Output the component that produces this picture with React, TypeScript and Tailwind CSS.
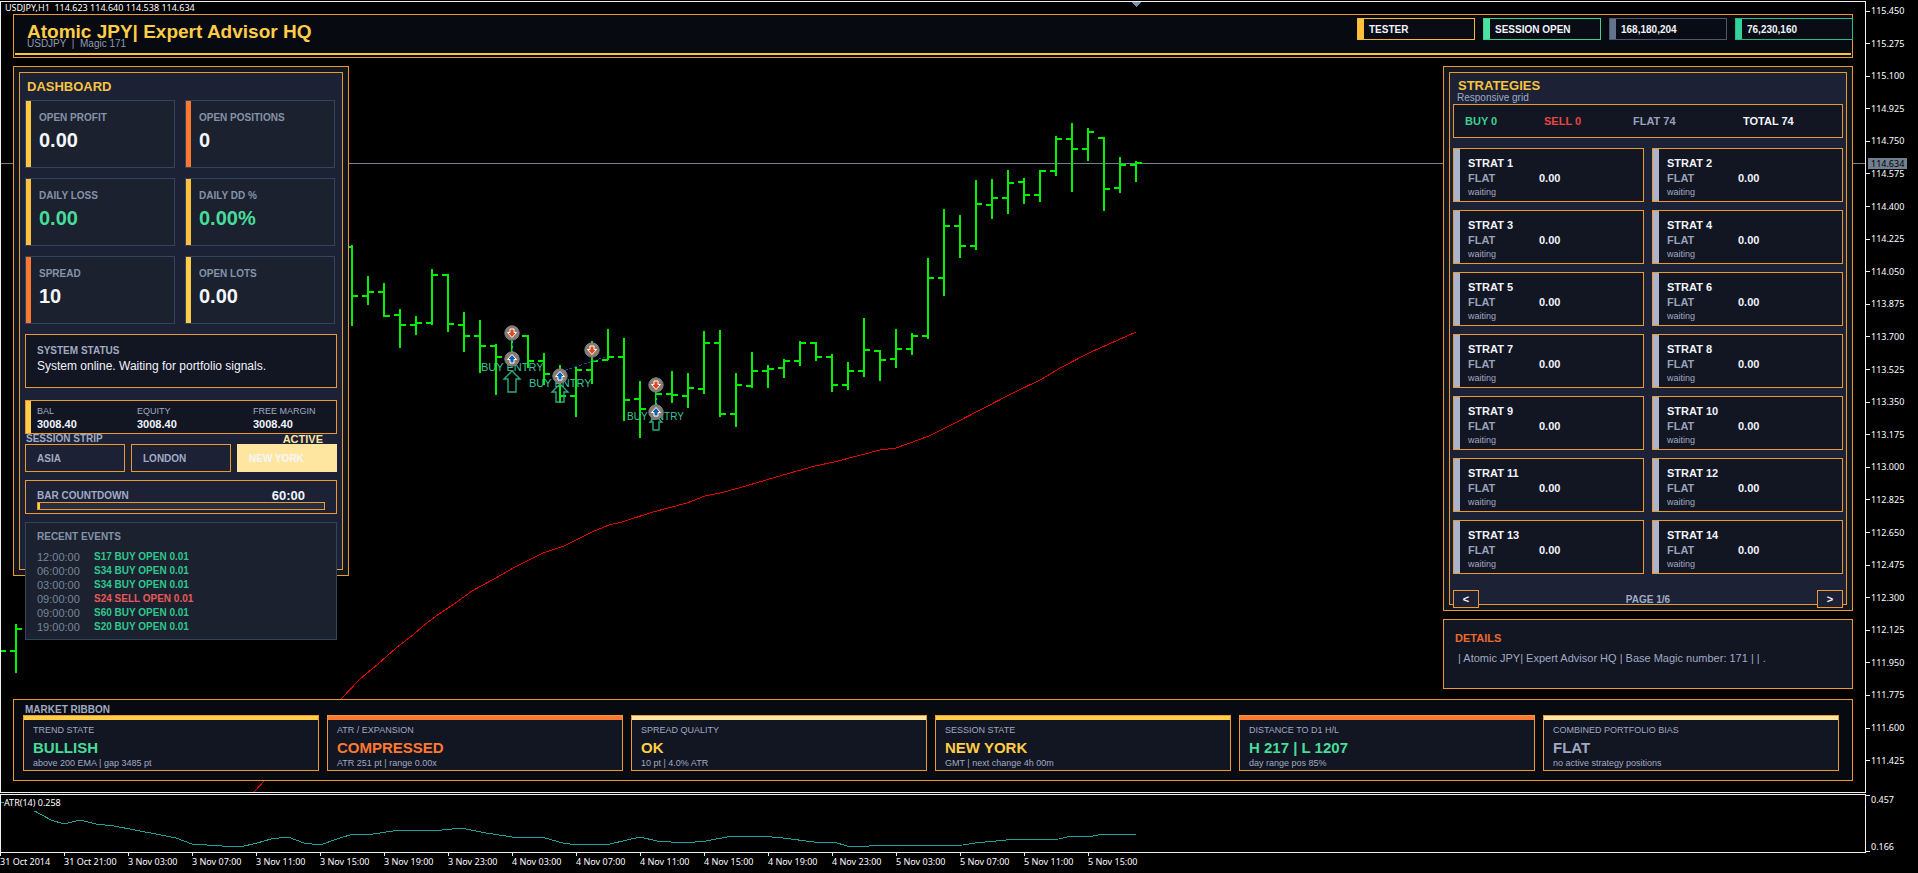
import { useState } from 'react';
import clsx from 'clsx';

const BARS: [number, number, number, number, number][] = [
  // x, high, low, open, close
  [0, 640, 660, 651, 651],
  [16, 624, 673, 651, 629],
  [352, 245, 326, 247, 296],
  [368, 276, 305, 296, 292],
  [384, 283, 317, 292, 316],
  [400, 309, 348, 315, 325],
  [416, 316, 335, 325, 323],
  [432, 269, 325, 323, 275],
  [448, 274, 332, 275, 324],
  [464, 312, 352, 325, 336],
  [480, 320, 373, 336, 346],
  [496, 344, 395, 346, 357],
  [512, 330, 360, 357, 336],
  [528, 335, 368, 336, 361],
  [544, 353, 385, 361, 374],
  [560, 365, 403, 374, 396],
  [576, 366, 417, 396, 370],
  [592, 341, 384, 370, 361],
  [608, 329, 360, 360, 357],
  [624, 338, 421, 357, 400],
  [640, 381, 438, 399, 409],
  [656, 380, 418, 409, 394],
  [672, 371, 403, 394, 395],
  [688, 373, 408, 396, 388],
  [704, 331, 394, 389, 343],
  [720, 330, 417, 343, 414],
  [736, 373, 427, 414, 385],
  [752, 352, 388, 386, 371],
  [768, 365, 388, 371, 369],
  [784, 359, 378, 368, 361],
  [800, 341, 366, 361, 343],
  [816, 342, 361, 343, 357],
  [832, 354, 392, 357, 385],
  [848, 362, 390, 385, 371],
  [864, 318, 377, 371, 350],
  [880, 350, 381, 351, 360],
  [896, 329, 368, 359, 349],
  [912, 333, 355, 349, 336],
  [928, 258, 339, 336, 278],
  [944, 209, 296, 278, 226],
  [960, 215, 258, 226, 246],
  [976, 180, 250, 246, 204],
  [992, 179, 219, 205, 198],
  [1008, 170, 214, 198, 183],
  [1024, 178, 204, 182, 195],
  [1040, 170, 202, 195, 171],
  [1056, 136, 176, 171, 139],
  [1072, 123, 192, 139, 149],
  [1088, 128, 161, 149, 132],
  [1104, 137, 211, 138, 189],
  [1120, 157, 193, 188, 165],
  [1136, 161, 182, 165, 163],
];

const EMA_POINTS =
  '254,792 265,780 300,743 341,699 360,679 378,664 396,648 414,634 428,622 439,614 454,604 472,591 494,579 515,567 543,553 564,546 592,532 609,525 622,522 653,512 687,503 705,496 720,493 739,488 766,480 797,471 815,466 834,462 861,455 880,450 896,448 910,443 929,436 953,424 984,408 1011,394 1042,379 1060,368 1091,352 1136,332';

const ATR_POINTS =
  '0,802 16,803 31,809 51,820 64,824 80,820 96,824 114,826 135,830 161,835 176,838 192,844 222,846 240,847 257,843 271,839 288,837 304,843 320,845 337,839 353,834 373,834 400,830 433,831 461,828 486,833 512,837 545,838 563,843 577,845 588,844 610,844 640,837 657,841 671,842 695,842 706,841 732,836 761,836 783,838 814,842 834,842 847,846 869,846 874,845 904,845 920,846 963,845 975,843 1006,840 1059,839 1071,836 1089,837 1102,834 1136,834';

const DEALS = [
  { x: 512, y: 333, side: 'sell' },
  { x: 512, y: 359, side: 'buy' },
  { x: 560, y: 376, side: 'buy' },
  { x: 592, y: 350, side: 'sell' },
  { x: 656, y: 385, side: 'sell' },
  { x: 656, y: 412, side: 'buy' },
];

const TIMES = [
  '31 Oct 2014', '31 Oct 21:00', '3 Nov 03:00', '3 Nov 07:00', '3 Nov 11:00', '3 Nov 15:00',
  '3 Nov 19:00', '3 Nov 23:00', '4 Nov 03:00', '4 Nov 07:00', '4 Nov 11:00', '4 Nov 15:00',
  '4 Nov 19:00', '4 Nov 23:00', '5 Nov 03:00', '5 Nov 07:00', '5 Nov 11:00', '5 Nov 15:00',
];

const PRICES = Array.from({ length: 24 }, (_, i) => (115.45 - i * 0.175).toFixed(3));

const BADGES = [
  { label: 'TESTER', border: 'border-[#f9b934]', bar: 'bg-[#ffc13b]' },
  { label: 'SESSION OPEN', border: 'border-[#3fd08d]', bar: 'bg-[#4ae3a0]' },
  { label: '168,180,204', border: 'border-[#4d586e]', bar: 'bg-[#64748b]' },
  { label: '76,230,160', border: 'border-[#2bb98a]', bar: 'bg-[#34d399]' },
];

const STATS = [
  { label: 'OPEN PROFIT', value: '0.00', color: 'text-[#f4f6fa]', bar: 'bg-[#ffc63f]' },
  { label: 'OPEN POSITIONS', value: '0', color: 'text-[#f4f6fa]', bar: 'bg-[#ff7832]' },
  { label: 'DAILY LOSS', value: '0.00', color: 'text-[#48dc9a]', bar: 'bg-[#ffbe3c]' },
  { label: 'DAILY DD %', value: '0.00%', color: 'text-[#48dc9a]', bar: 'bg-[#ffbe3c]' },
  { label: 'SPREAD', value: '10', color: 'text-[#f4f6fa]', bar: 'bg-[#ff7832]' },
  { label: 'OPEN LOTS', value: '0.00', color: 'text-[#f4f6fa]', bar: 'bg-[#ffcd48]' },
];

const ACCOUNT = [
  { label: 'BAL', value: '3008.40' },
  { label: 'EQUITY', value: '3008.40' },
  { label: 'FREE MARGIN', value: '3008.40' },
];

const SESSIONS = ['ASIA', 'LONDON', 'NEW YORK'];

const EVENTS = [
  { time: '12:00:00', text: 'S17 BUY OPEN 0.01', side: 'buy' },
  { time: '06:00:00', text: 'S34 BUY OPEN 0.01', side: 'buy' },
  { time: '03:00:00', text: 'S34 BUY OPEN 0.01', side: 'buy' },
  { time: '09:00:00', text: 'S24 SELL OPEN 0.01', side: 'sell' },
  { time: '09:00:00', text: 'S60 BUY OPEN 0.01', side: 'buy' },
  { time: '19:00:00', text: 'S20 BUY OPEN 0.01', side: 'buy' },
];

const RIBBON = [
  { label: 'TREND STATE', value: 'BULLISH', note: 'above 200 EMA | gap 3485 pt', color: 'text-[#48dc9a]', bar: 'bg-[#ffcd48]' },
  { label: 'ATR / EXPANSION', value: 'COMPRESSED', note: 'ATR 251 pt | range 0.00x', color: 'text-[#ff7832]', bar: 'bg-[#ff7832]' },
  { label: 'SPREAD QUALITY', value: 'OK', note: '10 pt | 4.0% ATR', color: 'text-[#ffcd48]', bar: 'bg-[#ffe6a0]' },
  { label: 'SESSION STATE', value: 'NEW YORK', note: 'GMT | next change 4h 00m', color: 'text-[#ffcd48]', bar: 'bg-[#ffcd48]' },
  { label: 'DISTANCE TO D1 H/L', value: 'H 217 | L 1207', note: 'day range pos 85%', color: 'text-[#48dc9a]', bar: 'bg-[#ff7832]' },
  { label: 'COMBINED PORTFOLIO BIAS', value: 'FLAT', note: 'no active strategy positions', color: 'text-[#a0aac3]', bar: 'bg-[#ffe6a0]' },
];

const TOTAL_STRATEGIES = 74;
const PER_PAGE = 14;
const PAGES = Math.ceil(TOTAL_STRATEGIES / PER_PAGE);

function DealMarker({ x, y, side }: { x: number; y: number; side: string }) {
  return (
    <g transform={`translate(${x} ${y})`}>
      <circle r="7.2" fill="#8c7b6e" stroke="#76808e" strokeWidth="1" />
      <path
        d="M0 -4.5 L4.5 0.5 H2 V4 H-2 V0.5 H-4.5 Z"
        transform={side === 'sell' ? 'rotate(180)' : undefined}
        fill={side === 'sell' ? '#e8431f' : '#0a62b4'}
        stroke="#ffffff"
        strokeWidth="1"
      />
    </g>
  );
}

function PriceChart() {
  return (
    <svg
      viewBox="1 2 1864 790"
      preserveAspectRatio="xMinYMin slice"
      className="absolute inset-0 h-full w-full font-['Liberation_Sans',Arial,sans-serif]"
      shapeRendering="crispEdges"
    >
      <path d="M1131 2 H1141 L1136 7 Z" fill="#8090a4" />
      <rect x="0" y="163" width="1866" height="1" fill="#708090" />
      <polyline points={EMA_POINTS} fill="none" stroke="#e60000" strokeWidth="1" />
      {BARS.map(([x, high, low, open, close]) => (
        <path
          key={x}
          d={`M${x} ${high} V${low} M${x - 6} ${open} H${x} M${x} ${close} H${x + 6}`}
          stroke="#00f000"
          strokeWidth="2"
        />
      ))}
      <g shapeRendering="auto" fill="#3cc498">
        <text x="481" y="371" fontSize="11">BUY ENTRY</text>
        <text x="529" y="387" fontSize="11">BUY ENTRY</text>
        <text x="627" y="420" fontSize="10">BUY ENTRY</text>
      </g>
      <g shapeRendering="auto" fill="none" stroke="#2cab82" strokeWidth="1.4">
        <path d="M512 371 L520 379 H516 V392 H508 V379 H504 Z" />
        <path d="M560 384 L568 392 H564 V402 H556 V392 H552 Z" />
        <path d="M656 416 L662 422 H659 V430 H653 V422 H650 Z" />
      </g>
      <path d="M512 333 V359 M560 372 L608 356 M656 385 V411" stroke="#0a4f9b" strokeWidth="1" strokeDasharray="3 2" />
      <g shapeRendering="auto">
        {DEALS.map((d) => (
          <DealMarker key={`${d.x}-${d.y}`} {...d} />
        ))}
      </g>
    </svg>
  );
}

function Header() {
  return (
    <header className="border border-[#eb9a2e] bg-[#070a11] pb-[2px]">
      <div className="flex items-start justify-between">
        <div className="pt-[6px] pl-[13px]">
          <h1 className="text-[19px] leading-[22px] font-bold text-[#ffcd48]">Atomic JPY| Expert Advisor HQ</h1>
          <p className="-mt-[5px] text-[10px] leading-3 whitespace-pre text-[#8f99b0]">USDJPY  |  Magic 171</p>
        </div>
        <ul className="mt-[3px] -mr-px flex gap-2">
          {BADGES.map((b) => (
            <li key={b.label} className={clsx('flex h-[22px] w-[118px] border bg-[#090c14]', b.border)}>
              <span className={clsx('w-[6px]', b.bar)} />
              <span className="pt-px pl-[5px] text-[10px] leading-5 font-bold text-[#f0f3fa]">{b.label}</span>
            </li>
          ))}
        </ul>
      </div>
      <div className="mx-px mt-[3px] h-[2px] bg-[#fbc23c]" />
    </header>
  );
}

function Dashboard() {
  const [session, setSession] = useState('NEW YORK');

  return (
    <section className="w-[336px] shrink-0 border border-[#eb9a2e] bg-[#12161f] p-[5px]">
      <div className="border border-[#eb9a2e] bg-[#1c2135] px-[5px]">
        <h2 className="pl-[2px] text-[13px] leading-[27px] font-bold text-[#f6c443]">DASHBOARD</h2>

        <div className="grid grid-cols-2 gap-[10px] pr-[2px]">
          {STATS.map((s) => (
            <div key={s.label} className="flex h-[68px] border border-[#33455a] bg-[#1b212e]">
              <span className={clsx('w-[5px]', s.bar)} />
              <div className="pt-[11px] pl-2">
                <p className="text-[10px] leading-3 font-bold text-[#8592a8]">{s.label}</p>
                <p className={clsx('mt-1 text-[20px] leading-6 font-bold', s.color)}>{s.value}</p>
              </div>
            </div>
          ))}
        </div>

        <div className="mt-[10px] border border-[#eb9a2e] bg-[#121522] pt-[9px] pb-[13px] pl-[11px]">
          <h3 className="text-[10px] leading-[14px] font-bold text-[#a0aac3]">SYSTEM STATUS</h3>
          <p className="text-[12px] leading-4 text-[#f0f3fa]">System online. Waiting for portfolio signals.</p>
        </div>

        <div className="mt-3 flex border border-[#eb9a2e] bg-[#121522]">
          <span className="w-[5px] bg-[#ffcd48]" />
          <dl className="grid flex-1 grid-cols-[100px_116px_1fr] pt-1 pb-[2px] pl-[6px]">
            {ACCOUNT.map((a) => (
              <div key={a.label}>
                <dt className="text-[9px] leading-3 text-[#a0aac3]">{a.label}</dt>
                <dd className="text-[11px] leading-[14px] font-bold text-[#f0f3fa]">{a.value}</dd>
              </div>
            ))}
          </dl>
        </div>

        <div className="flex justify-between pr-[14px] pl-px leading-[10px] font-bold">
          <h3 className="text-[10px] text-[#a0aac3]">SESSION STRIP</h3>
          <span className="text-[11px] text-[#ffe6a0]">ACTIVE</span>
        </div>
        <div className="grid grid-cols-3 gap-[6px]">
          {SESSIONS.map((s) => (
            <button
              key={s}
              type="button"
              onClick={() => setSession(s)}
              className={clsx(
                'h-7 border pl-[11px] text-left text-[10px] font-bold',
                s === session ? 'border-[#ffe6a0] bg-[#ffe6a0] text-[#f5f7ff]' : 'border-[#eb9a2e] bg-[#1c2135] text-[#a0aac3]',
              )}
            >
              {s}
            </button>
          ))}
        </div>

        <div className="mt-2 border border-[#eb9a2e] bg-[#1c2135] px-[11px] pt-2 pb-[3px]">
          <div className="flex justify-between pr-5 leading-[13px] font-bold">
            <span className="text-[10px] text-[#a0aac3]">BAR COUNTDOWN</span>
            <span className="text-[13px] text-[#f0f3fa]">60:00</span>
          </div>
          <div className="h-2 border border-[#eb9a2e] bg-[#262e42]">
            <div className="h-full w-[2px] bg-[#ffcd48]" />
          </div>
        </div>

        {/* the event log hangs below the panel frame */}
        <div className="relative mt-2 -mb-[71px] border border-[#33455a] bg-[#1b212e] pt-[7px] pb-[5px] pl-[11px]">
          <h3 className="text-[10px] leading-[14px] font-bold text-[#8592a8]">RECENT EVENTS</h3>
          <ul className="mt-[6px]">
            {EVENTS.map((e, i) => (
              <li key={i} className="flex leading-[14px]">
                <time className="w-[57px] text-[11px] text-[#78859c]">{e.time}</time>
                <span className={clsx('text-[10px] font-bold', e.side === 'buy' ? 'text-[#2fc78e]' : 'text-[#e65a5a]')}>
                  {e.text}
                </span>
              </li>
            ))}
          </ul>
        </div>
      </div>
    </section>
  );
}

function Strategies() {
  const [page, setPage] = useState(1);
  const first = (page - 1) * PER_PAGE + 1;
  const count = Math.min(PER_PAGE, TOTAL_STRATEGIES - first + 1);

  return (
    <section className="border border-[#eb9a2e] bg-[#12161f] p-[5px]">
      <div className="border border-[#eb9a2e] bg-[#1c2135] px-[3px] pt-[7px]">
        <h2 className="pl-[5px] text-[13px] leading-3 font-bold text-[#f6c443]">STRATEGIES</h2>
        <p className="pl-1 text-[10px] leading-3 text-[#a0aac3]">Responsive grid</p>

        <div className="grid grid-cols-[79px_89px_110px_1fr] border border-[#eb9a2e] bg-[#121522] pl-[11px] text-[11px] leading-8 font-bold">
          <span className="text-[#3ccf8f]">BUY 0</span>
          <span className="text-[#e64646]">SELL 0</span>
          <span className="text-[#98a2b9]">FLAT 74</span>
          <span className="text-[#f0f3fa]">TOTAL 74</span>
        </div>

        <div className="mt-[10px] grid grid-cols-2 gap-2">
          {Array.from({ length: count }, (_, i) => first + i).map((n) => (
            <div key={n} className="flex border border-[#eb9a2e] bg-[#121522]">
              <span className="w-[6px] bg-[#aab4cd]" />
              <div className="pt-[7px] pb-[3px] pl-2">
                <p className="text-[11px] leading-[14px] font-bold text-[#f0f3fa]">STRAT {n}</p>
                <p className="flex text-[11px] leading-4 font-bold">
                  <span className="w-[71px] text-[#98a2b9]">FLAT</span>
                  <span className="text-[#f0f3fa]">0.00</span>
                </p>
                <p className="text-[9px] leading-3 text-[#a0aac3]">waiting</p>
              </div>
            </div>
          ))}
        </div>

        {/* the pager straddles the bottom edge of the inner frame */}
        <div className="mt-4 -mb-1 flex items-center justify-between text-[11px] font-bold">
          <button
            type="button"
            aria-label="Previous page"
            onClick={() => setPage((p) => Math.max(1, p - 1))}
            className="h-[18px] w-[26px] border border-[#eb9a2e] bg-[#1c2135] leading-4 text-[#f0f3fa]"
          >
            &lt;
          </button>
          <span className="text-[10px] text-[#a0aac3]">PAGE {page}/{PAGES}</span>
          <button
            type="button"
            aria-label="Next page"
            onClick={() => setPage((p) => Math.min(PAGES, p + 1))}
            className="h-[18px] w-[26px] border border-[#eb9a2e] bg-[#1c2135] leading-4 text-[#f0f3fa]"
          >
            &gt;
          </button>
        </div>
      </div>
    </section>
  );
}

function Details() {
  return (
    <section className="mt-2 border border-[#eb9a2e] bg-[#121522] px-[11px] pt-[11px] pb-[22px]">
      <h2 className="text-[11px] leading-[14px] font-bold text-[#eb6a2c]">DETAILS</h2>
      <p className="mt-[5px] text-[11px] leading-4 whitespace-pre text-[#a0aac3]">
        {' | Atomic JPY| Expert Advisor HQ | Base Magic number: 171 | | .'}
      </p>
    </section>
  );
}

function MarketRibbon() {
  return (
    <section className="mt-[10px] border border-[#eb9a2e] bg-[#070a11] pt-[5px] pr-[13px] pb-[9px] pl-[9px]">
      <h2 className="pl-[2px] text-[10px] leading-[10px] font-bold text-[#a0aac3]">MARKET RIBBON</h2>
      <div className="grid grid-cols-6 gap-2">
        {RIBBON.map((r) => (
          <div key={r.label} className="border border-[#eb9a2e] bg-[#121522] pb-px">
            <div className={clsx('h-1', r.bar)} />
            <div className="pt-1 pl-[9px]">
              <p className="text-[9px] leading-[13px] text-[#a0aac3]">{r.label}</p>
              <p className={clsx('mt-[2px] text-[15px] leading-[18px] font-bold', r.color)}>{r.value}</p>
              <p className="text-[9px] leading-3 text-[#a0aac3]">{r.note}</p>
            </div>
          </div>
        ))}
      </div>
    </section>
  );
}

export default function App() {
  return (
    <main className="min-h-screen overflow-hidden bg-black pt-px font-['Liberation_Sans',Arial,sans-serif] text-white">
      <div className="flex">
        <div className="relative min-w-0 flex-1 overflow-hidden border border-[#f0f0f0] px-3 pb-[11px]">
          <PriceChart />
          <div className="relative">
            <p className="-ml-2 font-['Noto_Sans',sans-serif] text-[9px] leading-3 whitespace-pre">
              USDJPY,H1  114.623 114.640 114.538 114.634
            </p>
            <Header />
            <div className="mt-2 flex items-start justify-between">
              <Dashboard />
              <div className="w-[410px] shrink-0">
                <Strategies />
                <Details />
              </div>
            </div>
            <MarketRibbon />
          </div>
        </div>

        <div className="relative flex w-[52px] flex-col justify-between pt-1 pb-[26px] font-['Noto_Sans',sans-serif] text-[9px] leading-3">
          {PRICES.map((p) => (
            <div key={p} className="flex items-center gap-px">
              <span className="h-px w-1 bg-[#f0f0f0]" />
              {p}
            </div>
          ))}
          <span className="absolute top-[157px] left-[2px] bg-[#708090] px-[3px] leading-[11px] text-black">114.634</span>
        </div>
      </div>

      <div className="mt-px flex">
        <div className="relative h-[59px] min-w-0 flex-1 overflow-hidden border border-[#f0f0f0]">
          <svg
            viewBox="1 795 1864 57"
            preserveAspectRatio="xMinYMin slice"
            className="absolute inset-0 h-full w-full"
            shapeRendering="crispEdges"
          >
            <polyline points={ATR_POINTS} fill="none" stroke="#20a098" strokeWidth="1" />
          </svg>
          <p className="relative ml-[3px] w-fit bg-black font-['Noto_Sans',sans-serif] text-[9px] leading-4">ATR(14) 0.258</p>
        </div>
        <div className="flex w-[52px] flex-col justify-between font-['Noto_Sans',sans-serif] text-[9px] leading-3">
          <div className="flex items-start gap-px">
            <span className="mt-px h-px w-1 bg-[#f0f0f0]" />
            0.457
          </div>
          <div className="flex items-end gap-px">
            <span className="mb-px h-px w-1 bg-[#f0f0f0]" />
            0.166
          </div>
        </div>
      </div>

      <div className="flex h-5 font-['Noto_Sans',sans-serif] text-[9px] leading-3 whitespace-nowrap">
        {TIMES.map((t) => (
          <div key={t} className="w-16 shrink-0">
            <div className="h-[3px] w-px bg-[#f0f0f0]" />
            {t}
          </div>
        ))}
      </div>
    </main>
  );
}
